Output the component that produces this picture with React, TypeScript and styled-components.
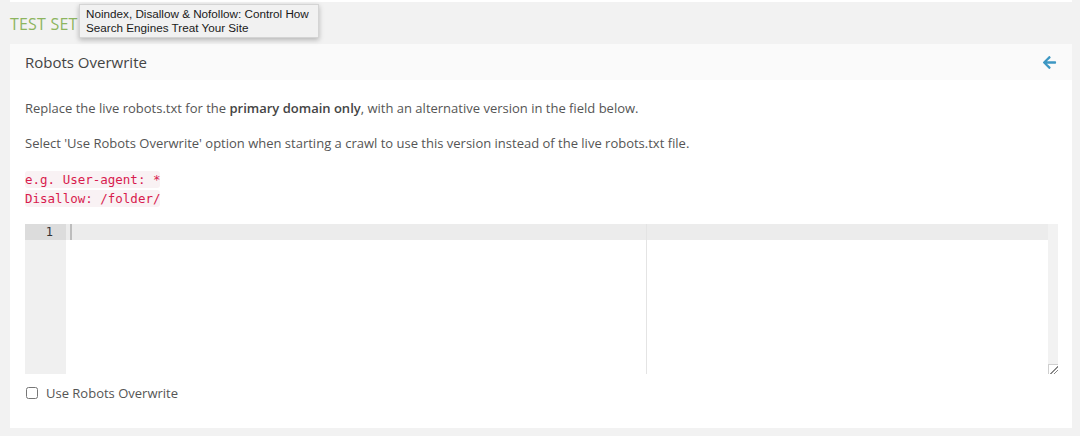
import React from 'react';
import styled, { createGlobalStyle } from 'styled-components';
import { FaArrowLeft } from 'react-icons/fa';

const colors = {
  page: '#f2f2f2',
  text: '#555555',
  heading: '#444444',
  green: '#8db55f',
  blue: '#3d97c3',
  code: '#d81b4e',
  codeBg: '#f9f2f4',
};

const GlobalStyle = createGlobalStyle`
  html, body {
    margin: 0;
    padding: 0;
    background: ${colors.page};
    font-family: 'Open Sans', 'Lato', sans-serif;
  }
`;

const App: React.FC = () => {
  return (
    <>
      <GlobalStyle />
      <PageWrap>
        <PrevPanelEdge />
        <SectionTitle>TEST SET</SectionTitle>
        <Tooltip>
          Noindex, Disallow &amp; Nofollow: Control How
          <br />
          Search Engines Treat Your Site
        </Tooltip>
        <Panel>
          <PanelHeader>
            <PanelTitle>Robots Overwrite</PanelTitle>
            <BackButton aria-label="back">
              <FaArrowLeft size={15} />
            </BackButton>
          </PanelHeader>
          <PanelBody>
            <Paragraph>
              Replace the live robots.txt for the <strong>primary domain only</strong>, with an
              alternative version in the field below.
            </Paragraph>
            <Paragraph>
              Select 'Use Robots Overwrite' option when starting a crawl to use this version instead
              of the live robots.txt file.
            </Paragraph>
            <CodeSample>
              <CodeLine>
                <Code>e.g. User-agent: *</Code>
              </CodeLine>
              <CodeLine>
                <Code>Disallow: /folder/</Code>
              </CodeLine>
            </CodeSample>
            <EditorWrap>
              <Editor>
                <Gutter>
                  <LineNumber active>1</LineNumber>
                </Gutter>
                <Lines>
                  <Line active>
                    <Cursor />
                  </Line>
                  <PrintMargin />
                </Lines>
              </Editor>
              <ScrollTrack>
                <ResizeHandle />
              </ScrollTrack>
            </EditorWrap>
            <CheckRow>
              <CheckBox type="checkbox" id="use-robots" />
              <CheckLabel htmlFor="use-robots">Use Robots Overwrite</CheckLabel>
            </CheckRow>
          </PanelBody>
        </Panel>
      </PageWrap>
    </>
  );
};

const PageWrap = styled.div`
  position: relative;
  padding: 0 8px 8px 10px;
  height: 436px;
  box-sizing: border-box;
`;

const PrevPanelEdge = styled.div`
  height: 2px;
  background: #ffffff;
`;

const SectionTitle = styled.h2`
  margin: 0;
  height: 42px;
  line-height: 44px;
  font-size: 16px;
  font-weight: 400;
  letter-spacing: 0.2px;
  color: ${colors.green};
`;

const Tooltip = styled.div`
  position: absolute;
  left: 79px;
  top: 4px;
  width: 240px;
  height: 34px;
  box-sizing: border-box;
  padding: 2px 6px;
  background: #f1f1f1;
  border: 1px solid #d4d4d4;
  box-shadow: 0 2px 5px rgba(0, 0, 0, 0.25);
  font-family: 'Liberation Sans', Arial, sans-serif;
  font-size: 11.7px;
  line-height: 14px;
  color: #1a1a1a;
  z-index: 2;
`;

const Panel = styled.section`
  background: #ffffff;
  width: 1062px;
`;

const PanelHeader = styled.div`
  display: flex;
  align-items: center;
  justify-content: space-between;
  height: 36px;
  padding: 0 15px;
  background: #fafafa;
`;

const PanelTitle = styled.h3`
  margin: 0;
  font-size: 15px;
  font-weight: 400;
  color: ${colors.heading};
`;

const BackButton = styled.span`
  display: flex;
  color: ${colors.blue};
  margin-right: 0;
`;

const PanelBody = styled.div`
  padding: 19px 14px 26px 15px;
  color: ${colors.text};
  font-size: 13px;
  line-height: 18px;
`;

const Paragraph = styled.p`
  margin: 0 0 17px;

  strong {
    font-weight: 600;
    color: #444;
  }
`;

const CodeSample = styled.div`
  padding-top: 1px;
  margin: 0 0 16px;
`;

const CodeLine = styled.div`
  height: 19px;
  line-height: 19px;
`;

const Code = styled.code`
  font-family: 'DejaVu Sans Mono', monospace;
  font-size: 12.5px;
  padding: 1px 0;
  color: ${colors.code};
  background: ${colors.codeBg};
  border-radius: 3px;
`;

const EditorWrap = styled.div`
  display: flex;
  width: 1033px;
  height: 150px;
`;

const Editor = styled.div`
  flex: 1;
  display: flex;
  background: #ffffff;
  font-family: 'DejaVu Sans Mono', monospace;
  font-size: 12px;
`;

const Gutter = styled.div`
  width: 41px;
  background: #f0f0f0;
`;

const LineNumber = styled.div<{ active?: boolean }>`
  height: 16px;
  line-height: 16px;
  padding-right: 13px;
  text-align: right;
  color: #333;
  background: ${(p) => (p.active ? '#dcdcdc' : 'transparent')};
`;

const Lines = styled.div`
  position: relative;
  flex: 1;
`;

const Line = styled.div<{ active?: boolean }>`
  height: 16px;
  padding-left: 4px;
  background: ${(p) => (p.active ? '#ececec' : 'transparent')};
`;

const Cursor = styled.span`
  display: inline-block;
  width: 2px;
  height: 16px;
  background: #bdbdbd;
`;

const PrintMargin = styled.div`
  position: absolute;
  top: 0;
  bottom: 0;
  left: 580px;
  width: 1px;
  background: #e4e4e4;
`;

const ScrollTrack = styled.div`
  display: flex;
  align-items: flex-end;
  width: 10px;
  background: #f2f2f2;
`;

const ResizeHandle = styled.div`
  width: 10px;
  height: 10px;
  box-sizing: border-box;
  border-left: 1px solid #cfcfcf;
  border-top: 1px solid #cfcfcf;
  background:
    linear-gradient(135deg, transparent 55%, #888 55%, #888 63%, transparent 63%, transparent 75%, #888 75%, #888 83%, transparent 83%),
    #ffffff;
`;

const CheckRow = styled.div`
  display: flex;
  align-items: center;
  margin-top: 10px;
  height: 18px;
`;

const CheckBox = styled.input`
  margin: 0 8px 0 1px;
  width: 12px;
  height: 12px;
`;

const CheckLabel = styled.label`
  font-size: 13px;
  color: ${colors.text};
`;

export default App;
